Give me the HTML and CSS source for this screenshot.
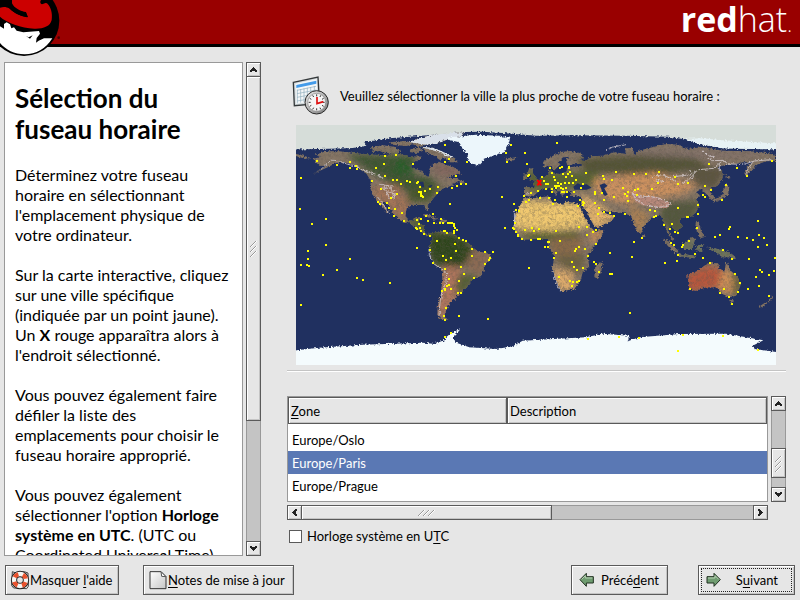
FILE: index.html
```
<!DOCTYPE html>
<html lang="fr">
<head>
  <meta charset="UTF-8">
  <meta name="viewport" content="width=device-width, initial-scale=1.0">
  <title>Sélection du fuseau horaire</title>
  <link rel="stylesheet" href="styles.css">
</head>
<body>
  <header class="banner">
    <svg class="shadowman" viewBox="0 0 189 171" aria-hidden="true">
      <circle cx="72" cy="62" r="106" fill="#000"/>
      <path d="M0 79L12 86L12 72L20 67L30 73L34 85L42 82L50 92L70 97L117 93L120 101L110 114L108 128L116 122L132 115L157 115C137 147 108 163 74 163C43 163 17 149 0 129Z" fill="#fff"/>
      <path d="M0 23C12 19 20 21 27 25C46 43 65 49 84 51L77 36C63 36 42 26 33 14L35 0H123L127 7L137 9L141 10C153 21 158 40 155 60C151 79 129 87 103 86C64 84 19 68 0 50Z" fill="#c00"/>
      <path d="M29 0C25 13 25 20 29 25C43 41 64 50 83 52L78 36C62 35 41 23 36 10V0ZM123 0C119 5 121 12 126 13L137 9L132 0Z" fill="#000"/>
      <path d="M78 108L86 112L98 106L90 116Z" fill="#000"/>
      <circle cx="176" cy="113" r="4" fill="#400"/>
    </svg>
    <div class="brand"><b>red</b>hat<small>.</small></div>
  </header>

  <main class="main">
    <aside class="help">
      <div class="help-text">
        <h1>Sélection du<br>fuseau horaire</h1>
        <p>Déterminez votre fuseau<br>horaire en sélectionnant<br>l'emplacement physique de<br>votre ordinateur.</p>
        <p>Sur la carte interactive, cliquez<br>sur une ville spécifique<br>(indiquée par un point jaune).<br>Un <b>X</b> rouge apparaîtra alors à<br>l'endroit sélectionné.</p>
        <p>Vous pouvez également faire<br>défiler la liste des<br>emplacements pour choisir le<br>fuseau horaire approprié.</p>
        <p>Vous pouvez également<br>sélectionner l'option <b>Horloge<br>système en UTC</b>. (UTC ou<br>Coordinated Universal Time)</p>
      </div>
      <div class="scrollbar vertical">
        <button class="arrow" aria-label="Haut"><svg viewBox="0 0 7 5"><path d="M3 0h1v1h1v1h1v1h1v2H5V4H2v1H0V3h1V2h1V1h1z"/></svg></button>
        <div class="thumb help-thumb"><svg viewBox="0 0 7 17"><path class="lite" d="M1 7L7 1M1 12L7 6M1 17L7 11"/><path d="M0 7L6 1M0 12L6 6M0 17L6 11"/></svg></div>
        <div class="trough"></div>
        <button class="arrow" aria-label="Bas"><svg viewBox="0 0 7 5"><path d="M0 0h2v1h3V0h2v2H6v1H5v1H4v1H3V4H2V3H1V2H0z"/></svg></button>
      </div>
    </aside>

    <section class="panel">
      <div class="prompt">
        <svg class="clock-icon" viewBox="0 0 114 117" aria-hidden="true">
          <defs>
            <linearGradient id="metal" x1="0" y1="0" x2="1" y2="1"><stop offset="0" stop-color="#eee"/><stop offset="1" stop-color="#777"/></linearGradient>
          </defs>
          <path d="M4 19L78 3L82 70L76 83L7 89Z" fill="#d3dadd" stroke="#34383a" stroke-width="4"/>
          <path d="M10 23L74 9L77 72L12 84Z" fill="#f4f7f8"/>
          <path d="M13 27L73 14V23L13 36Z" fill="#439be9"/>
          <path d="M15 43L72 31M15 53L73 42M15 64L74 53M15 75L74 65M16 41V82M26 39V80M36 37V78M46 35V77M56 33V75M67 30V73" stroke="#90aebd" stroke-width="2"/>
          <circle cx="74" cy="79" r="35" fill="url(#metal)" stroke="#292929" stroke-width="3"/>
          <circle cx="74" cy="79" r="27" fill="#f5f5f5" stroke="#888" stroke-width="2"/>
          <path d="M74 55v6M74 97v6M50 79h6M92 79h6M86 58l-2 5M95 67l-5 3M95 91l-5-3M86 100l-2-5M62 100l3-5M53 91l5-3M53 67l5 3M62 58l3 5" stroke="#333" stroke-width="3"/>
          <path d="M75 63V83L94 77" fill="none" stroke="#e01010" stroke-width="5"/>
        </svg>
        <span>Veuillez sélectionner la ville la plus proche de votre fuseau horaire :</span>
      </div>

      <div class="map-frame">
      <svg class="map" viewBox="0 3 1440 720" role="img" aria-label="Carte des fuseaux horaires">
        <defs>
          <filter id="soft" x="-20%" y="-20%" width="140%" height="140%"><feGaussianBlur stdDeviation="9"/></filter>
          <filter id="coast" filterUnits="userSpaceOnUse" x="-40" y="-40" width="1520" height="800">
            <feTurbulence type="fractalNoise" baseFrequency="0.16" numOctaves="2" seed="4"/>
            <feDisplacementMap in="SourceGraphic" scale="12" xChannelSelector="R" yChannelSelector="G"/>
          </filter>
          <filter id="grain" x="0" y="0" width="100%" height="100%">
            <feTurbulence type="fractalNoise" baseFrequency="0.11" numOctaves="4" seed="8"/>
            <feColorMatrix values="0 0 0 0 0.12  0 0 0 0 0.1  0 0 0 0 0.08  1.8 0 0 0 -0.72"/>
          </filter>
          <clipPath id="land">
            <!-- Americas -->
            <path d="M58 92L90 82L130 82L180 88L230 92L270 93L300 88L340 97L378 98L368 109L345 118L347 132L375 140L394 158L402 150L400 135L412 120L432 113L455 125L470 128L490 140L494 150L470 155L450 162L478 162L508 177L500 180L485 172L462 187L440 194L426 207L415 220L405 232L395 243L397 262L390 258L385 243L350 243L332 252L328 273L335 288L350 290L360 279L373 280L368 292L373 300L385 303L383 320L392 331L408 328L422 325L436 320L475 328L490 345L515 355L530 370L545 382L580 390L585 403L570 418L562 440L555 456L530 465L515 487L496 508L480 518L478 525L462 533L455 550L448 565L445 579L457 588L435 585L424 572L426 545L435 510L439 470L440 440L420 425L408 405L398 375L406 354L410 340L405 334L390 337L375 322L360 312L345 300L320 292L295 275L285 255L265 232L260 235L282 272L265 258L245 230L232 215L222 190L225 172L212 150L190 135L170 122L150 116L120 117L95 130L50 150L92 126L70 125L60 115L52 105L75 98ZM0 90L18 94L42 101L30 105L0 96Z"/>
            <path d="M225 70L260 64L292 68L315 80L300 90L263 86L250 80L232 84ZM278 55L332 51L352 60L332 66L290 62ZM338 54L375 40L440 28L505 24L498 35L450 47L425 57L390 62L370 70ZM345 73L372 72L382 80L362 87L340 84ZM378 68L415 72L448 87L477 103L485 115L464 115L448 102L430 107L416 96L391 85ZM380 275L398 272L425 285L414 287L398 279ZM430 287L453 288L450 297L430 295ZM412 297L424 296L423 300L412 300Z"/>
            <path d="M628 101L640 103L661 100L656 107L640 111L630 107ZM699 135L709 132L708 145L718 157L723 168L701 170L704 158L695 148ZM682 152L695 150L694 164L682 166Z"/>
            <!-- Europe and Asia -->
            <path transform="translate(720 0)" d="M-10 176L10 165L30 155L41 150L38 135L49 145L75 150L90 141L95 130L138 125L144 119L110 121L92 125L90 105L102 98L84 100L69 115L75 130L65 142L53 138L46 126L25 128L20 115L45 98L75 84L105 81L135 88L146 100L130 106L152 109L166 97L200 95L235 85L270 90L267 73L289 72L295 92L310 80L340 72L390 60L430 62L450 75L500 70L560 80L640 82L700 88L720 96L720 111L690 112L662 122L650 137L630 156L625 148L635 125L650 115L620 115L600 120L570 122L545 130L560 145L560 165L545 185L525 193L524 207L536 222L526 228L515 214L505 205L495 195L480 205L492 214L480 225L490 245L480 265L465 278L445 280L430 286L437 308L425 323L410 312L401 305L396 320L415 345L410 350L395 330L385 300L375 275L355 275L340 290L320 310L315 330L305 325L290 290L285 275L265 268L235 264L205 262L188 246L200 265L215 271L237 276L226 292L187 311L174 305L153 265L136 240L137 218L105 215L102 205L112 200L95 202L85 210L80 219L71 205L55 190L50 192L66 205L60 216L45 195L30 190L5 205L-10 218L-36 215L-36 190L-5 190Z"/>
            <!-- Africa -->
            <path transform="translate(720 0)" d="M-35 222L-10 222L40 217L48 234L80 242L90 233L128 240L147 283L164 310L176 321L205 318L195 340L170 375L155 395L160 430L140 445L135 465L115 495L75 502L65 480L48 435L55 400L40 370L35 345L0 345L-40 347L-58 328L-68 310L-62 270L-45 240Z"/>
            <!-- islands -->
            <path transform="translate(720 0)" d="M178 426L201 411L197 435L186 465L175 459ZM380 342L402 355L427 380L418 388L395 365ZM425 388L480 396L475 403L425 395ZM439 360L469 339L477 346L468 377L445 377ZM481 365L505 361L493 371L503 382L494 383L487 376L482 385ZM514 370L545 375L580 385L605 404L580 400L560 400L542 386ZM480 290L489 297L495 320L506 339L494 342L487 325L478 314ZM565 150L584 162L573 165ZM570 180L580 188L576 213L560 225L536 235L528 229L559 212ZM319 333L326 334L323 342L317 341Z"/>
            <!-- Australia, New Zealand -->
            <path transform="translate(720 0)" d="M454 453L485 441L505 425L521 417L546 418L550 432L565 444L571 410L584 440L605 460L613 485L600 515L580 520L555 508L543 490L510 490L480 500L461 497ZM579 527L594 529L588 543ZM668 549L695 531L710 515L711 522L690 541L675 550Z"/>
          </clipPath>
        </defs>

        <rect y="3" width="1440" height="720" fill="#203060"/>
        <g filter="url(#coast)">
          <g clip-path="url(#land)">
            <rect y="3" width="1440" height="720" fill="#857565"/>
            <g filter="url(#soft)">
              <path d="M150 90L360 95L350 150L420 165L400 210L320 200L210 135Z" fill="#3d5533"/>
              <path d="M300 95L345 120L350 155L290 150Z" fill="#295b2b"/>
              <path d="M340 195L440 180L400 235L330 235Z" fill="#46562c"/>
              <path d="M225 190L305 180L345 250L330 290L275 255L235 220Z" fill="#a17359"/>
              <path d="M400 115L500 130L490 155L425 155Z" fill="#83685f"/>
              <path d="M340 280L420 310L410 340L330 295Z" fill="#46592f"/>
              <path d="M405 325L480 330L535 370L520 410L480 435L410 420L395 370Z" fill="#2e451f"/>
              <path d="M530 375L590 385L550 455L505 425Z" fill="#8b6b52"/>
              <path d="M450 425L495 430L490 510L445 580L420 570L435 460Z" fill="#b0765d"/>
              <path d="M490 450L550 455L500 510L475 500Z" fill="#545f34"/>
              <path d="M690 140L900 145L930 185L700 200Z" fill="#566333"/>
              <path d="M840 105L1170 85L1240 130L1070 155L870 145Z" fill="#535336"/>
              <path d="M960 90L1060 78L1420 86L1370 102L1200 103L1060 95Z" fill="#82716a"/>
              <path d="M890 165L1080 145L1210 185L1160 210L980 240L900 210Z" fill="#cc915f"/>
              <path d="M650 228L845 235L880 310L760 320L650 315Z" fill="#f0c870"/>
              <path d="M855 210L925 250L965 280L900 315L850 260Z" fill="#e3b36c"/>
              <path d="M660 325L850 323L840 355L710 347Z" fill="#55602c"/>
              <path d="M770 340L865 340L845 410L790 420L760 370Z" fill="#8a6a48"/>
              <path d="M775 395L870 390L855 450L800 430Z" fill="#6c6242"/>
              <path d="M770 430L830 445L835 500L780 505Z" fill="#dcaa6c"/>
              <path d="M890 318L930 310L905 355L875 350Z" fill="#c58c5a"/>
              <path d="M1000 240L1060 270L1040 335L1005 310Z" fill="#a98055"/>
              <path d="M1100 235L1220 230L1190 285L1150 350L1090 290Z" fill="#53583d"/>
              <path d="M1175 130L1290 130L1260 195L1200 185Z" fill="#5b553f"/>
              <path d="M1160 455L1230 425L1285 435L1310 490L1260 495L1170 505Z" fill="#b8583c"/>
              <path d="M1280 435L1340 460L1310 510L1265 500Z" fill="#cd9059"/>
              <path d="M1310 420L1340 460L1335 510L1310 520Z" fill="#68633d"/>
              <path d="M1150 340L1330 370L1320 405L1150 405Z" fill="#6b725b"/>
            </g>
            <path d="M1005 210L1035 217L1070 216L1095 222L1125 241L1110 254L1080 250L1040 244L1018 232Z" fill="#b98a7c"/>
            <rect y="3" width="1440" height="720" filter="url(#grain)" opacity=".6"/>
            <path d="M338 54L375 40L440 28L505 24L498 35L450 47L425 57L390 62ZM375 68L410 70L440 80L470 97L465 102L430 85Z" fill="#d9e0e9"/>
          </g>
          <path d="M454 40L480 38L540 32L610 35L642 42L637 60L625 85L590 95L565 105L545 126L525 118L512 103L517 90L500 75L490 55L460 48Z" fill="#ecf6fb"/>
          <path d="M-30 -30H1470V76H1440L1280 73L1230 64L1190 55L1160 45L1120 38L990 35L850 34L720 35L620 27L560 23L500 24L440 30L340 38L280 43L205 54L211 65L170 72L100 74L-30 77Z" fill="#d6ddd9"/>
          <path d="M1160 45L1220 43L1280 49L1470 60V76H1440L1280 73L1230 64L1190 55Z" fill="#e7f2f5"/>
          <path d="M-30 682L70 671L200 662L380 656L425 661L418 655L440 652L450 640L462 630L495 615L470 640L481 656L520 670L600 675L650 667L680 650L720 648L870 640L920 629L1000 635L995 652L1030 640L1150 630L1290 629L1360 641L1402 649L1370 665L1376 675L1470 688V755H-30Z" fill="#f4fbfd"/>
        </g>
        <!-- lakes and inland seas -->
        <path d="M832 188L845 178L855 182L872 181L887 191L871 197L835 197ZM911 183L925 178L935 185L925 193L935 212L927 216L919 208L916 196ZM770 144L786 149L810 143L813 131L842 126L814 125L807 102L795 119ZM363 174L382 173L385 190L378 190L373 180ZM394 187L410 182L405 190Z" fill="#203060"/>
        <!-- snow and mountain ridges -->
        <g class="ridges" filter="url(#coast)">
          <path d="M75 136L105 108L130 111L155 121L180 126L199 138L220 146L242 151L264 164M250 181L268 184L294 186M256 192L280 193L298 200M270 202L298 210L291 220M284 188L295 225M263 183L281 224M243 217L260 238L280 270"/>
          <path d="M399 370L400 395L417 422L441 438L452 447L450 475L437 506L431 545L429 575M690 210L709 208"/>
          <path d="M1009 205L1020 228L1048 242L1086 251L1113 244L1124 239L1094 224L1063 217L1035 219L1007 207M1068 158L1099 152L1125 164L1139 170M1080 168L1110 174M1130 158L1180 153L1210 137L1252 133L1281 109L1295 119L1340 122L1375 111L1426 107M1180 139L1195 155L1160 178M1234 102L1250 110L1281 109M1220 80L1235 95L1256 98M1270 119L1270 142M1370 115L1356 135L1350 152"/>
          <path d="M930 80L950 69L990 62M655 260L656 309M770 441L784 486L795 502"/>
        </g>
        <path class="cities" d="M63 111h0M123 123h0M162 114h0M162 132h0M180 126h0M183 135h0M228 171h0M240 132h0M264 120h0M267 96h0M300 93h0M351 120h0M267 156h0M291 168h0M303 168h0M315 180h0M333 171h0M342 174h0M363 177h0M366 174h0M372 189h0M387 201h0M402 195h0M426 189h0M423 207h0M369 204h0M375 204h0M375 210h0M378 216h0M381 219h0M375 216h0M447 63h0M459 105h0M447 114h0M513 114h0M480 156h0M468 192h0M483 186h0M495 180h0M510 180h0M462 240h0M255 195h0M303 210h0M285 222h0M273 237h0M246 234h0M252 240h0M279 252h0M297 255h0M294 276h0M318 267h0M324 291h0M363 288h0M375 285h0M390 276h0M411 270h0M396 291h0M414 297h0M369 300h0M360 312h0M363 315h0M372 312h0M375 321h0M384 330h0M402 336h0M435 285h0M432 297h0M441 297h0M456 297h0M462 297h0M468 297h0M474 300h0M474 306h0M477 312h0M483 318h0M474 321h0M474 327h0M444 321h0M453 327h0M447 321h0M423 351h0M363 372h0M402 378h0M411 417h0M489 342h0M501 348h0M510 351h0M477 360h0M480 381h0M528 375h0M528 396h0M567 384h0M591 384h0M582 402h0M579 408h0M567 420h0M465 402h0M450 408h0M441 396h0M447 435h0M495 429h0M504 450h0M459 465h0M489 471h0M534 462h0M459 483h0M453 486h0M465 495h0M447 495h0M438 501h0M447 498h0M486 507h0M495 507h0M450 552h0M444 576h0M447 588h0M489 576h0M576 585h0M447 639h0M465 627h0M15 162h0M12 255h0M90 285h0M48 300h0M90 363h0M36 381h0M36 405h0M15 423h0M33 423h0M39 426h0M81 453h0M123 438h0M162 405h0M183 462h0M201 468h0M282 477h0M15 543h0M645 63h0M630 87h0M633 114h0M687 87h0M693 120h0M618 219h0M654 240h0M660 258h0M669 261h0M627 312h0M651 312h0M654 315h0M657 297h0M660 324h0M666 333h0M666 336h0M678 345h0M687 318h0M708 312h0M714 321h0M705 348h0M699 432h0M684 216h0M699 228h0M690 234h0M705 207h0M699 153h0M696 156h0"/>
        <path class="cities" transform="translate(720 0)" d="M63 57h0M42 132h0M48 147h0M18 159h0M24 171h0M30 180h0M36 180h0M54 159h0M57 168h0M72 132h0M78 129h0M99 129h0M99 132h0M102 144h0M96 150h0M81 150h0M90 159h0M108 156h0M120 168h0M111 177h0M99 177h0M87 177h0M75 180h0M66 177h0M69 186h0M63 186h0M57 186h0M48 195h0M48 204h0M60 192h0M75 192h0M81 195h0M78 204h0M84 204h0M93 204h0M90 192h0M114 204h0M135 192h0M141 180h0M150 147h0M30 195h0M6 201h0M12 222h0M39 222h0M51 240h0M57 228h0M93 219h0M132 228h0M126 246h0M141 234h0M144 237h0M141 243h0M177 204h0M177 210h0M201 156h0M204 165h0M240 144h0M228 168h0M294 150h0M330 150h0M369 144h0M417 159h0M366 177h0M348 195h0M426 180h0M456 177h0M261 192h0M276 204h0M267 210h0M273 216h0M276 231h0M297 198h0M306 195h0M303 213h0M204 228h0M234 219h0M198 207h0M177 237h0M189 252h0M204 264h0M222 267h0M234 276h0M186 270h0M267 270h0M342 258h0M357 261h0M354 279h0M360 276h0M426 252h0M456 279h0M453 279h0M486 243h0M486 270h0M501 213h0M507 219h0M507 186h0M525 198h0M558 228h0M570 183h0M519 120h0M603 132h0M633 156h0M708 111h0M384 303h0M408 300h0M402 315h0M417 324h0M426 327h0M483 312h0M405 357h0M414 363h0M438 369h0M441 363h0M459 351h0M426 393h0M423 411h0M387 417h0M477 390h0M501 402h0M522 417h0M561 378h0M588 405h0M639 405h0M537 339h0M552 333h0M579 315h0M582 309h0M606 339h0M633 342h0M651 348h0M669 333h0M684 342h0M666 291h0M666 369h0M693 363h0M717 402h0M714 441h0M699 453h0M672 438h0M678 444h0M660 459h0M669 486h0M699 516h0M636 495h0M606 504h0M612 477h0M597 450h0M564 495h0M552 507h0M579 519h0M588 540h0M462 495h0M318 342h0M294 354h0M288 399h0M222 387h0M222 450h0M228 450h0M189 444h0M180 420h0M174 414h0M282 567h0M129 309h0M153 309h0M153 333h0M171 324h0M180 318h0M180 360h0M60 321h0M9 315h0M72 351h0M39 354h0M36 354h0M27 369h0M36 369h0M12 345h0M6 345h0M60 387h0M54 402h0M129 369h0M120 375h0M117 381h0M147 375h0M156 396h0M108 414h0M114 429h0M123 438h0M141 432h0M69 459h0M102 471h0M111 474h0M123 474h0M129 471h0M108 486h0M156 645h0M249 639h0M309 642h0M441 633h0M561 636h0M426 681h0M666 678h0"/>
        <path class="selected-city" d="M724 168L736 184M736 168L724 184"/>
      </svg>
      </div>

      <hr class="rule">

      <div class="zones">
        <table class="zone-table">
          <thead><tr><th><u>Z</u>one</th><th>Description</th></tr></thead>
          <tbody>
            <tr><td>Europe/Moscow</td><td></td></tr>
            <tr><td>Europe/Oslo</td><td></td></tr>
            <tr class="selected"><td>Europe/Paris</td><td></td></tr>
            <tr><td>Europe/Prague</td><td></td></tr>
            <tr><td>Europe/Riga</td><td></td></tr>
          </tbody>
        </table>
        <div class="scrollbar vertical">
          <button class="arrow" aria-label="Haut"><svg viewBox="0 0 7 5"><path d="M3 0h1v1h1v1h1v1h1v2H5V4H2v1H0V3h1V2h1V1h1z"/></svg></button>
          <div class="trough"></div>
          <div class="thumb zone-thumb"><svg viewBox="0 0 7 17"><path class="lite" d="M1 7L7 1M1 12L7 6M1 17L7 11"/><path d="M0 7L6 1M0 12L6 6M0 17L6 11"/></svg></div>
          <div class="trough trough-end"></div>
          <button class="arrow" aria-label="Bas"><svg viewBox="0 0 7 5"><path d="M0 0h2v1h3V0h2v2H6v1H5v1H4v1H3V4H2V3H1V2H0z"/></svg></button>
        </div>
        <div class="scrollbar horizontal">
          <button class="arrow" aria-label="Gauche"><svg viewBox="0 0 5 7"><path d="M5 0v2H4v3h1v2H3V6H2V5H1V4H0V3h1V2h1V1h1V0z"/></svg></button>
          <div class="thumb wide-thumb"><svg viewBox="0 0 17 7"><path class="lite" d="M1 7L7 1M6 7L12 1M11 7L17 1"/><path d="M0 7L6 1M5 7L11 1M10 7L16 1"/></svg></div>
          <div class="trough"></div>
          <button class="arrow" aria-label="Droite"><svg viewBox="0 0 5 7"><path d="M0 0v2h1v3H0v2h2V6h1V5h1V4h1V3H4V2H3V1H2V0z"/></svg></button>
        </div>
      </div>

      <label class="utc"><input type="checkbox"><span>Horloge système en U<u>T</u>C</span></label>
    </section>
  </main>

  <footer class="footer">
    <button class="btn btn-help">
      <svg viewBox="0 0 60 60" aria-hidden="true">
        <path d="M7 5L15 8L43 5L54 9L55 49L50 56L11 54L5 47Z" fill="none" stroke="#444" stroke-width="3"/>
        <circle cx="30" cy="30" r="18" fill="none" stroke="#222" stroke-width="19"/>
        <circle cx="30" cy="30" r="18" fill="none" stroke="#f5f5f2" stroke-width="13"/>
        <circle cx="30" cy="30" r="18" fill="none" stroke="#e8512c" stroke-width="13" stroke-dasharray="14 14.3" stroke-dashoffset="-7"/>
      </svg>
      <span>Masquer <u>l</u>'aide</span>
    </button>
    <button class="btn btn-notes">
      <svg viewBox="0 0 60 60" aria-hidden="true">
        <defs><linearGradient id="sheet" x1="0" y1="0" x2="1" y2="1"><stop offset="0" stop-color="#fff"/><stop offset="1" stop-color="#c5c5c5"/></linearGradient></defs>
        <path d="M6 5H39L54 20V56H6Z" fill="url(#sheet)" stroke="#333" stroke-width="3"/>
        <path d="M39 5L41 19L54 20Z" fill="#fff" stroke="#555" stroke-width="3"/>
      </svg>
      <span><u>N</u>otes de mise à jour</span>
    </button>
    <button class="btn btn-back">
      <svg viewBox="0 0 48 48" aria-hidden="true">
        <path d="M3 23L22 4V14H43V33H22V43Z" fill="#6f9c70" stroke="#203020" stroke-width="3"/>
        <path d="M8 22L19 11V18H40" fill="none" stroke="#b6d0b3" stroke-width="3"/>
      </svg>
      <span>Précé<u>d</u>ent</span>
    </button>
    <button class="btn btn-next">
      <svg viewBox="0 0 48 48" aria-hidden="true">
        <path d="M43 23L24 4V14H3V33H24V43Z" fill="#6f9c70" stroke="#203020" stroke-width="3"/>
        <path d="M6 18H27V11L38 22" fill="none" stroke="#b6d0b3" stroke-width="3"/>
      </svg>
      <span>S<u>u</u>ivant</span>
    </button>
  </footer>
</body>
</html>
```
FILE: styles.css
```
* {
  box-sizing: border-box;
}
body {
  margin: 0;
  min-height: 100vh;
  display: flex;
  flex-direction: column;
  background: #e6e6e6;
  color: #000;
  font-family: Lato, "Open Sans", sans-serif;
  font-size: 13px;
  line-height: 20px;
}
button {
  font: inherit;
  color: inherit;
  background: #e6e6e6;
}
u {
  text-underline-offset: 2px;
}

/* banner */
.banner {
  position: relative;
  height: 47px;
  flex: none;
  display: flex;
  justify-content: flex-end;
  align-items: center;
  padding-right: 8px;
  background: #990000;
  border-bottom: 3px solid #000;
}
.shadowman {
  position: absolute;
  left: 0;
  top: 0;
  width: 63px;
  height: 57px;
}
.brand {
  color: #fff;
  font-family: "Open Sans", sans-serif;
  font-size: 34px;
  font-weight: 300;
  line-height: 44px;
}
.brand b {
  font-weight: 700;
}
.brand small {
  font-size: 20px;
}

.main {
  flex: 1;
  display: flex;
  gap: 26px;
  padding: 15px 14px 9px 4px;
}

/* help column */
.help {
  flex: 0 0 257px;
  height: calc(100vh - 106px);
  display: flex;
  gap: 3px;
}
.help-text {
  flex: 1;
  overflow: hidden;
  padding: 20px 10px 0;
  background: #fff;
  border: 1px solid #999;
  font-size: 16px;
  white-space: nowrap;
}
.help-text h1 {
  margin: 0 0 20px;
  font-size: 26px;
  line-height: 31px;
}
.help-text p {
  margin: 0 0 20px;
}

/* scrollbars */
.scrollbar {
  display: flex;
}
.vertical {
  flex-direction: column;
  width: 15px;
}
.horizontal {
  height: 15px;
}
.arrow,
.thumb {
  flex: none;
  display: flex;
  align-items: center;
  justify-content: center;
  padding: 0;
  background: #e6e6e6;
  border: 1px solid #5a5a5a;
  border-radius: 0;
  box-shadow: inset 1px 1px #fff, inset -1px -1px #c4c4c4;
}
.arrow {
  width: 15px;
  height: 15px;
}
.arrow svg {
  width: 7px;
  height: 7px;
  fill: #222;
}
.thumb svg {
  width: 7px;
  height: 17px;
  fill: none;
  stroke: #999;
}
.thumb .lite {
  stroke: #fff;
}
.trough {
  flex: 1;
  background: #c4c4c4;
  border: solid #999;
  border-width: 0 1px;
}
.horizontal .trough {
  border-width: 1px 0;
}
.help-thumb {
  flex: 0 1 345px;
  margin-top: -1px;
}
.zone-thumb {
  height: 30px;
}
.trough-end {
  flex: 0 0 9px;
}
.wide-thumb {
  width: 251px;
  margin-left: -1px;
}
.wide-thumb svg {
  width: 17px;
  height: 7px;
}

/* timezone panel */
.panel {
  flex: 1;
  min-width: 0;
  display: flex;
  flex-direction: column;
}
.prompt {
  display: flex;
  align-items: center;
  gap: 10px;
  padding: 14px 0 10px 5px;
}
.clock-icon {
  width: 38px;
  height: 39px;
}
.map-frame {
  width: 100%;
  max-width: 499px;
  padding: 0 10px 0 9px;
  margin: 0 auto;
}
.map {
  display: block;
  width: 100%;
}
/* each city is a zero-length stroke, its square cap makes the dot */
.cities {
  fill: none;
  stroke: #ff0;
  stroke-width: 6;
  stroke-linecap: square;
  shape-rendering: crispEdges;
}
.selected-city {
  stroke: #f00;
  stroke-width: 6;
}
.ridges {
  fill: none;
  stroke: #d5cdd0;
  stroke-width: 3;
  opacity: 0.8;
}
.rule {
  width: 100%;
  margin: 5px 0 24px;
  border: 0;
  border-top: 1px solid #c4c4c4;
  border-bottom: 1px solid #fff;
}
.zones {
  display: grid;
  grid-template-columns: 1fr 15px;
  grid-template-rows: 106px 15px;
  gap: 3px;
}
.zone-table {
  display: flex;
  flex-direction: column;
  background: #fff;
  border: 1px solid #999;
}
.zone-table thead {
  flex: none;
}
.zone-table tbody {
  flex: 1;
  min-height: 0;
  overflow: hidden;
  display: flex;
  flex-direction: column;
  justify-content: center;
}
.zone-table tr {
  flex: none;
  display: grid;
  grid-template-columns: 219px 1fr;
}
.zone-table th {
  height: 27px;
  padding: 3px 2px;
  text-align: left;
  font-weight: normal;
  background: #e6e6e6;
  border: 1px solid #5a5a5a;
  box-shadow: inset 1px 1px #fff, inset -1px -1px #c4c4c4;
}
.zone-table td {
  height: 23px;
  padding: 2px 4px;
}
.selected {
  background: #5a78b4;
  color: #fff;
}
.utc {
  display: flex;
  align-items: center;
  align-self: flex-start;
  gap: 5px;
  margin-top: 6px;
  padding-left: 2px;
}
.utc input {
  appearance: none;
  width: 13px;
  height: 13px;
  margin: 0;
  background: #fff;
  border: 1px solid #5a5a5a;
}

/* bottom buttons */
.footer {
  display: flex;
  padding: 0 5px 5px;
}
.btn {
  display: flex;
  align-items: center;
  height: 30px;
  padding: 0 4px;
  white-space: nowrap;
  border: 1px solid #5a5a5a;
  border-radius: 0;
  box-shadow: inset 1px 1px #fff, inset -1px -1px #c4c4c4;
}
.btn svg {
  flex: none;
  width: 20px;
  height: 20px;
}
.btn-help {
  width: 114px;
}
.btn-notes {
  width: 151px;
  margin-left: 24px;
}
.btn-back,
.btn-next {
  width: 97px;
  justify-content: space-between;
  padding: 0 8px 0 7px;
}
.btn-back {
  margin-left: auto;
}
.btn-next {
  margin-left: 30px;
  padding-right: 16px;
  outline: 1px dotted #222;
  outline-offset: -4px;
}
.btn-back svg,
.btn-next svg {
  width: 16px;
  height: 16px;
}
```
